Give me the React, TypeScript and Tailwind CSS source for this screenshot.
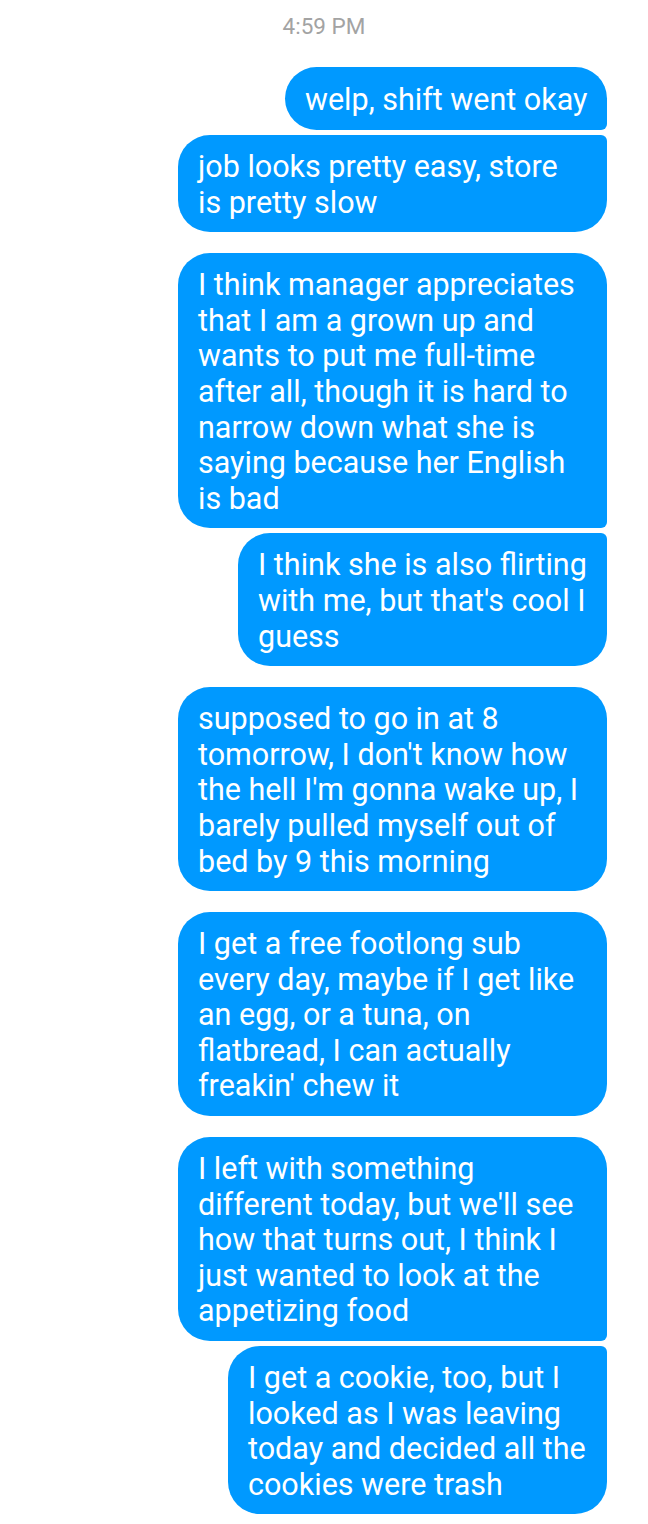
import React from 'react';

type Bubble = {
  lines: string[];
  width: string;
  corners: string;
};

type Group = Bubble[];

// big radius everywhere, small on the right side where bubbles touch
const TOP = 'rounded-[32px] rounded-br-[6px]';
const BOTTOM = 'rounded-[32px] rounded-tr-[6px]';
const SINGLE = 'rounded-[32px]';

const groups: Group[] = [
  [
    { lines: ['welp, shift went okay'], width: 'w-[322px] min-h-[63px]', corners: TOP },
    { lines: ['job looks pretty easy, store', 'is pretty slow'], width: 'w-[429px]', corners: BOTTOM },
  ],
  [
    {
      lines: [
        'I think manager appreciates',
        'that I am a grown up and',
        'wants to put me full-time',
        'after all, though it is hard to',
        'narrow down what she is',
        'saying because her English',
        'is bad',
      ],
      width: 'w-[429px]',
      corners: TOP,
    },
    {
      lines: ['I think she is also flirting', "with me, but that's cool I", 'guess'],
      width: 'w-[369px]',
      corners: BOTTOM,
    },
  ],
  [
    {
      lines: [
        'supposed to go in at 8',
        "tomorrow, I don't know how",
        "the hell I'm gonna wake up, I",
        'barely pulled myself out of',
        'bed by 9 this morning',
      ],
      width: 'w-[429px]',
      corners: SINGLE,
    },
  ],
  [
    {
      lines: [
        'I get a free footlong sub',
        'every day, maybe if I get like',
        'an egg, or a tuna, on',
        'flatbread, I can actually',
        "freakin' chew it",
      ],
      width: 'w-[429px]',
      corners: SINGLE,
    },
  ],
  [
    {
      lines: [
        'I left with something',
        "different today, but we'll see",
        'how that turns out, I think I',
        'just wanted to look at the',
        'appetizing food',
      ],
      width: 'w-[429px]',
      corners: TOP,
    },
    {
      lines: [
        'I get a cookie, too, but I',
        'looked as I was leaving',
        'today and decided all the',
        'cookies were trash',
      ],
      width: 'w-[379px]',
      corners: BOTTOM,
    },
  ],
];

const MessageBubble: React.FC<{ bubble: Bubble }> = ({ bubble }) => (
  <div
    className={`${bubble.width} ${bubble.corners} flex flex-col justify-center bg-[#0099ff] px-[20px] pt-[14px] pb-[12px] text-[30.5px] leading-[35.6px] text-white`}
  >
    {bubble.lines.map((line, i) => (
      <span key={i} className="block whitespace-nowrap">
        {line}
      </span>
    ))}
  </div>
);

const App: React.FC = () => {
  return (
    <div
      className="min-h-[1524px] w-[648px] bg-white"
      style={{ fontFamily: 'Roboto, "Noto Sans", sans-serif' }}
    >
      {/* Timestamp */}
      <div className="pt-[13px] text-center text-[22.5px] leading-[27px] text-[#a3a3a3]">4:59 PM</div>

      {/* Messages */}
      <div className="mt-[27px] flex flex-col items-end gap-[21px] pr-[41px]">
        {groups.map((group, gi) => (
          <div key={gi} className="flex flex-col items-end gap-[5px]">
            {group.map((bubble, bi) => (
              <MessageBubble key={bi} bubble={bubble} />
            ))}
          </div>
        ))}
      </div>
    </div>
  );
};

export default App;
